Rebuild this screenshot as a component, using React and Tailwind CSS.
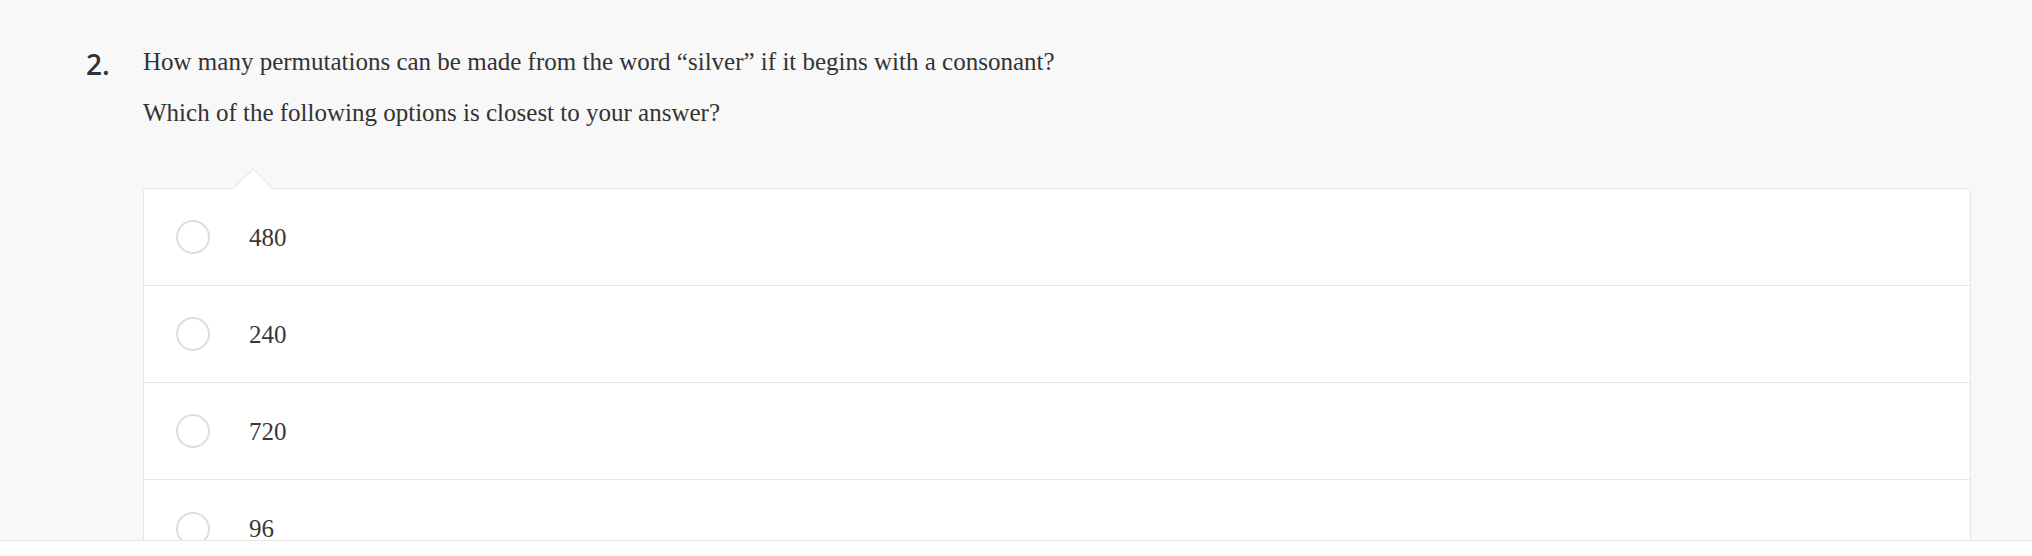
import React from 'react';

const options = ['480', '240', '720', '96'];

export default function App() {
  return (
    <div className="flex h-[556px] w-full flex-col overflow-hidden bg-[#f8f8f8]">
      <div className="flex-1 overflow-hidden">
        <div className="flex pt-[45px]">
          <div className="w-[143px] shrink-0 pl-[86px] pt-[3px]">
            <span className="font-['Open_Sans',sans-serif] text-[28px] font-semibold leading-[33px] text-[#333]">2.</span>
          </div>
          <div className="flex-1 pr-[61px] font-['Liberation_Serif',serif] text-[#333]">
            <p className="text-[25px] leading-[33px]">
              How many permutations can be made from the word “silver” if it begins with a consonant?
            </p>
            <p className="mt-[18px] text-[25px] leading-[33px]">
              Which of the following options is closest to your answer?
            </p>

            <div className="relative mt-[59px] rounded-[3px] border border-[#e6e6e6] bg-white">
              {/* pointer above the first option */}
              <div className="absolute left-[95px] top-[-15px] h-[28px] w-[28px] rotate-45 border-l border-t border-[#e6e6e6] bg-white" />
              {options.map((opt, i) => (
                <div
                  key={opt}
                  className={`relative flex h-[97px] items-center ${i < options.length - 1 ? 'border-b border-[#e6e6e6]' : ''}`}
                >
                  <span className="ml-[32px] h-[34px] w-[34px] shrink-0 rounded-full border-2 border-[#dedede]" />
                  <span className="ml-[39px] text-[25px] leading-none text-[#383838]">{opt}</span>
                </div>
              ))}
            </div>
          </div>
        </div>
      </div>
      <div className="h-[16px] shrink-0 border-t border-[#e6e6e6] bg-white" />
    </div>
  );
}
